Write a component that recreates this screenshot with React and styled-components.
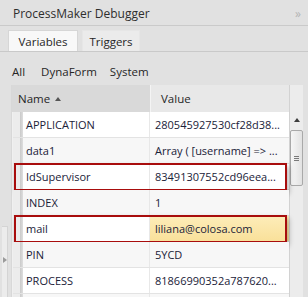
import React from "react";
import styled, { createGlobalStyle } from "styled-components";

const GlobalStyle = createGlobalStyle`
  body {
    margin: 0;
    background: #e1e1e1;
    font-family: "Open Sans", "Liberation Sans", sans-serif;
  }
`;

const Panel = styled.div`
  width: 308px;
  height: 297px;
  overflow: hidden;
  background: #e1e1e1;
`;

const TitleBar = styled.div`
  display: flex;
  align-items: center;
  justify-content: space-between;
  padding: 2px 8px 0 13px;
  box-sizing: border-box;
  height: 26px;
  border-bottom: 1px solid #cacaca;
  font-size: 12px;
  color: #2e2e2e;
`;

const Collapse = styled.span`
  color: #b4b4b4;
  font-size: 12px;
  letter-spacing: -1px;
`;

const TabStrip = styled.div`
  display: flex;
  align-items: flex-end;
  gap: 4px;
  height: 25px;
  padding-left: 8px;
  border-bottom: 1px solid #c9c9c9;
`;

const Tab = styled.div`
  height: 21px;
  box-sizing: border-box;
  display: flex;
  align-items: center;
  justify-content: center;
  width: ${(p) => (p.$active ? "70px" : "58px")};
  font-size: 11.5px;
  color: #262626;
  background: ${(p) => (p.$active ? "#f8f8f8" : "#ebebeb")};
  border: 1px solid ${(p) => (p.$active ? "#d6d6d6" : "#e6e6e6")};
  border-bottom: none;
`;

const FilterBar = styled.div`
  height: 33px;
  display: flex;
  align-items: center;
  gap: 13px;
  padding: 5px 0 0 12px;
  box-sizing: border-box;
  font-size: 11.5px;
  color: #262626;
`;

const FilterItem = styled.span`
  margin-right: ${(p) => (p.$first ? "3px" : "0")};
`;

const Body = styled.div`
  display: flex;
`;

const SideHandle = styled.div`
  width: 11px;
  display: flex;
  flex-direction: column;
  justify-content: flex-end;
  height: 213px;
`;

const HandleStrip = styled.div`
  margin-left: 2px;
  width: 6px;
  height: 72px;
  background: #ececec;
  border: 1px solid #d4d4d4;
  border-left: none;
  box-sizing: border-box;
  display: flex;
  justify-content: center;
  padding-top: 30px;
  &::before {
    content: "";
    border-left: 4px solid #9a9a9a;
    border-top: 3px solid transparent;
    border-bottom: 3px solid transparent;
    height: 0;
  }
`;

const Grid = styled.div`
  display: flex;
  width: 292px;
  height: 213px;
  overflow: hidden;
`;

const Table = styled.div`
  width: 278px;
  background: #f0f0f0;
  border-left: 1px solid #d8d8d8;
  box-sizing: border-box;
`;

const Header = styled.div`
  display: flex;
  height: 27px;
  font-size: 11.5px;
  color: #262626;
`;

const HeadCell = styled.div`
  display: flex;
  align-items: center;
  gap: 5px;
  box-sizing: border-box;
  background: ${(p) => (p.$sorted ? "#d9d9d9" : "#e8e8e8")};
  width: ${(p) => (p.$sorted ? "138px" : "auto")};
  flex: ${(p) => (p.$sorted ? "none" : "1")};
  padding-left: ${(p) => (p.$sorted ? "6px" : "10px")};
  border-left: ${(p) => (p.$sorted ? "none" : "1px solid #f4f4f4")};
`;

const SortArrow = styled.span`
  width: 0;
  height: 0;
  border-left: 3px solid transparent;
  border-right: 3px solid transparent;
  border-bottom: 4px solid #555;
  margin-top: 1px;
`;

const Row = styled.div`
  position: relative;
  display: flex;
  height: 25px;
  margin-left: 1px;
  border-bottom: 1px solid #e3e3e3;
  background: ${(p) => (p.$alt ? "#f7f7f7" : "#ffffff")};
  font-size: 11px;
  color: #1a2238;

  &::after {
    content: "";
    display: ${(p) => (p.$marked ? "block" : "none")};
    position: absolute;
    top: -1px;
    bottom: -2px;
    left: 1px;
    right: 2px;
    border: 2px solid #a80d0d;
    box-shadow: 2px 3px 5px rgba(0, 0, 0, 0.28);
    pointer-events: none;
  }
`;

const Marker = styled.div`
  width: 10px;
  flex: none;
  background: linear-gradient(to right, #ececec 0, #ececec 7px, #c9c9c9 7px, #dedede 10px);
`;

const NameCell = styled.div`
  width: 127px;
  flex: none;
  display: flex;
  align-items: center;
  padding-left: 3px;
  box-sizing: border-box;
  border-right: 1px solid #e8e8e8;
  white-space: nowrap;
  overflow: hidden;
`;

const ValueCell = styled.div`
  flex: 1;
  display: flex;
  align-items: center;
  padding-left: 5px;
  white-space: nowrap;
  overflow: hidden;
  background: ${(p) =>
    p.$selected ? "linear-gradient(#fdedb9, #f9e09a)" : "transparent"};
`;

const Scrollbar = styled.div`
  width: 14px;
  background: #ececec;
  border-left: 1px solid #d2d2d2;
  box-sizing: border-box;
  display: flex;
  flex-direction: column;
  align-items: center;
  padding-top: 33px;
`;

const UpArrow = styled.span`
  width: 0;
  height: 0;
  border-left: 3px solid transparent;
  border-right: 3px solid transparent;
  border-bottom: 4px solid #3c3c3c;
`;

const Thumb = styled.div`
  margin-top: 8px;
  width: 13px;
  height: 56px;
  box-sizing: border-box;
  border: 1px solid #a9a9a9;
  border-radius: 2px;
  background: linear-gradient(to right, #f6f6f6, #e2e2e2);
  display: flex;
  flex-direction: column;
  align-items: center;
  justify-content: center;
  gap: 1px;
`;

const Grip = styled.span`
  width: 5px;
  height: 1px;
  background: #7a7a7a;
`;

const rows = [
  { name: "APPLICATION", value: "280545927530cf28d38..." },
  { name: "data1", value: "Array ( [username] => ..." },
  { name: "IdSupervisor", value: "83491307552cd96eea...", marked: true },
  { name: "INDEX", value: "1" },
  { name: "mail", value: "liliana@colosa.com", marked: true, selected: true },
  { name: "PIN", value: "5YCD" },
  { name: "PROCESS", value: "81866990352a787620..." },
  { name: "", value: "" },
];

export default function App() {
  return (
    <>
      <GlobalStyle />
      <Panel>
        <TitleBar>
          <span>ProcessMaker Debugger</span>
          <Collapse>»</Collapse>
        </TitleBar>
        <TabStrip>
          <Tab $active>Variables</Tab>
          <Tab>Triggers</Tab>
        </TabStrip>
        <FilterBar>
          <FilterItem $first>All</FilterItem>
          <FilterItem>DynaForm</FilterItem>
          <FilterItem>System</FilterItem>
        </FilterBar>
        <Body>
          <SideHandle>
            <HandleStrip />
          </SideHandle>
          <Grid>
            <Table>
              <Header>
                <HeadCell $sorted>
                  Name <SortArrow />
                </HeadCell>
                <HeadCell>Value</HeadCell>
              </Header>
              {rows.map((r, i) => (
                <Row key={i} $alt={i % 2 === 1} $marked={r.marked}>
                  <Marker />
                  <NameCell>{r.name}</NameCell>
                  <ValueCell $selected={r.selected}>{r.value}</ValueCell>
                </Row>
              ))}
            </Table>
            <Scrollbar>
              <UpArrow />
              <Thumb>
                <Grip />
                <Grip />
                <Grip />
              </Thumb>
            </Scrollbar>
          </Grid>
        </Body>
      </Panel>
    </>
  );
}
